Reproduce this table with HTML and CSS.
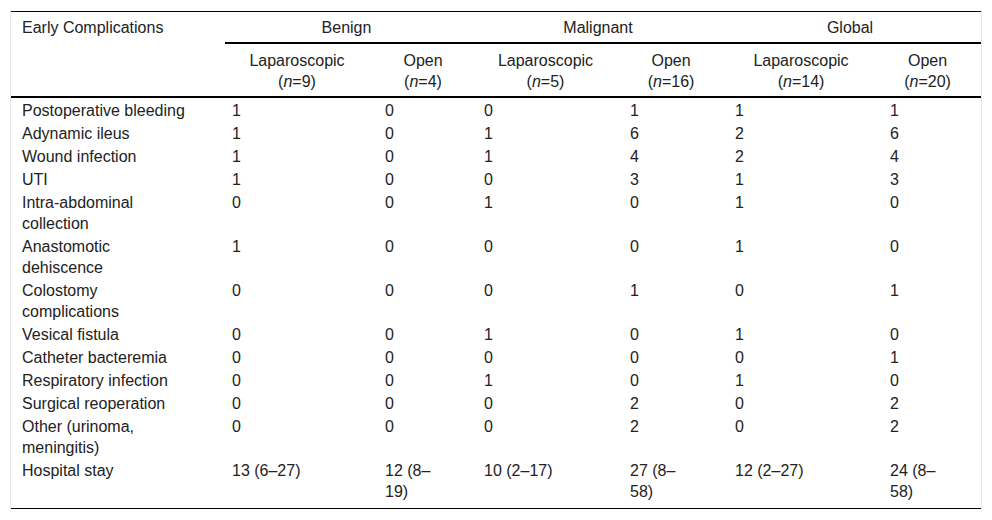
FILE: index.html
```html
<!DOCTYPE html>
<html lang="en">
<head>
<meta charset="utf-8">
<title>Early Complications</title>
<link rel="stylesheet" href="styles.css">
</head>
<body>
<div class="frame">
<table class="data">
<colgroup>
<col class="c-label"><col class="c-bl"><col class="c-bo"><col class="c-ml"><col class="c-mo"><col class="c-gl"><col class="c-go">
</colgroup>
<thead>
<tr>
<th class="label" rowspan="2">Early Complications</th>
<th class="group" colspan="2">Benign</th>
<th class="group" colspan="2">Malignant</th>
<th class="group" colspan="2">Global</th>
</tr>
<tr>
<th class="sub">Laparoscopic<br>(<i>n</i>=9)</th>
<th class="sub">Open<br>(<i>n</i>=4)</th>
<th class="sub">Laparoscopic<br>(<i>n</i>=5)</th>
<th class="sub">Open<br>(<i>n</i>=16)</th>
<th class="sub">Laparoscopic<br>(<i>n</i>=14)</th>
<th class="sub">Open<br>(<i>n</i>=20)</th>
</tr>
</thead>
<tbody>
<tr><td>Postoperative bleeding</td><td>1</td><td>0</td><td>0</td><td>1</td><td>1</td><td>1</td></tr>
<tr><td>Adynamic ileus</td><td>1</td><td>0</td><td>1</td><td>6</td><td>2</td><td>6</td></tr>
<tr><td>Wound infection</td><td>1</td><td>0</td><td>1</td><td>4</td><td>2</td><td>4</td></tr>
<tr><td>UTI</td><td>1</td><td>0</td><td>0</td><td>3</td><td>1</td><td>3</td></tr>
<tr><td>Intra-abdominal collection</td><td>0</td><td>0</td><td>1</td><td>0</td><td>1</td><td>0</td></tr>
<tr><td>Anastomotic dehiscence</td><td>1</td><td>0</td><td>0</td><td>0</td><td>1</td><td>0</td></tr>
<tr><td>Colostomy complications</td><td>0</td><td>0</td><td>0</td><td>1</td><td>0</td><td>1</td></tr>
<tr><td>Vesical fistula</td><td>0</td><td>0</td><td>1</td><td>0</td><td>1</td><td>0</td></tr>
<tr><td>Catheter bacteremia</td><td>0</td><td>0</td><td>0</td><td>0</td><td>0</td><td>1</td></tr>
<tr><td>Respiratory infection</td><td>0</td><td>0</td><td>1</td><td>0</td><td>1</td><td>0</td></tr>
<tr><td>Surgical reoperation</td><td>0</td><td>0</td><td>0</td><td>2</td><td>0</td><td>2</td></tr>
<tr><td>Other (urinoma, meningitis)</td><td>0</td><td>0</td><td>0</td><td>2</td><td>0</td><td>2</td></tr>
<tr class="last"><td>Hospital stay</td><td>13 (6–27)</td><td>12 (8–19)</td><td>10 (2–17)</td><td>27 (8–58)</td><td>12 (2–27)</td><td>24 (8–58)</td></tr>
</tbody>
</table>
</div>
</body>
</html>
```
FILE: styles.css
```css
html, body {
  margin: 0;
  padding: 0;
  background: #ffffff;
}

body {
  font-family: "Liberation Sans", Arial, sans-serif;
  font-size: 16px;
  line-height: 21px;
  color: #222222;
}

.frame {
  margin: 10px 10px 0 10px;
  padding-top: 1px;
  border-left: 1px solid #e6e6e6;
  border-right: 1px solid #e6e6e6;
}

.data {
  width: 100%;
  table-layout: fixed;
  border-collapse: separate;
  border-spacing: 0;
  border-top: 1px solid #000;
  border-bottom: 1px solid #000;
}

.c-label { width: 214px; }
.c-bl { width: 153px; }
.c-bo { width: 99px; }
.c-ml { width: 146px; }
.c-mo { width: 105px; }
.c-gl { width: 155px; }
.c-go { width: 98px; }

.data th {
  font-weight: normal;
  vertical-align: top;
}

.data th.label {
  text-align: left;
  padding: 5px 16px 5px 11px;
  border-bottom: 2px solid #000;
}

.data th.group {
  text-align: center;
  padding: 5px 16px 4px 7px;
  border-bottom: 2px solid #000;
}

.data th.sub {
  text-align: center;
  padding: 6px 16px 4px 7px;
  border-bottom: 2px solid #000;
}

.data td {
  text-align: left;
  vertical-align: top;
  padding: 2px 35px 0 7px;
}

.data td:first-child {
  padding-left: 11px;
}

.data tr.last td {
  padding-bottom: 6px;
}
```
